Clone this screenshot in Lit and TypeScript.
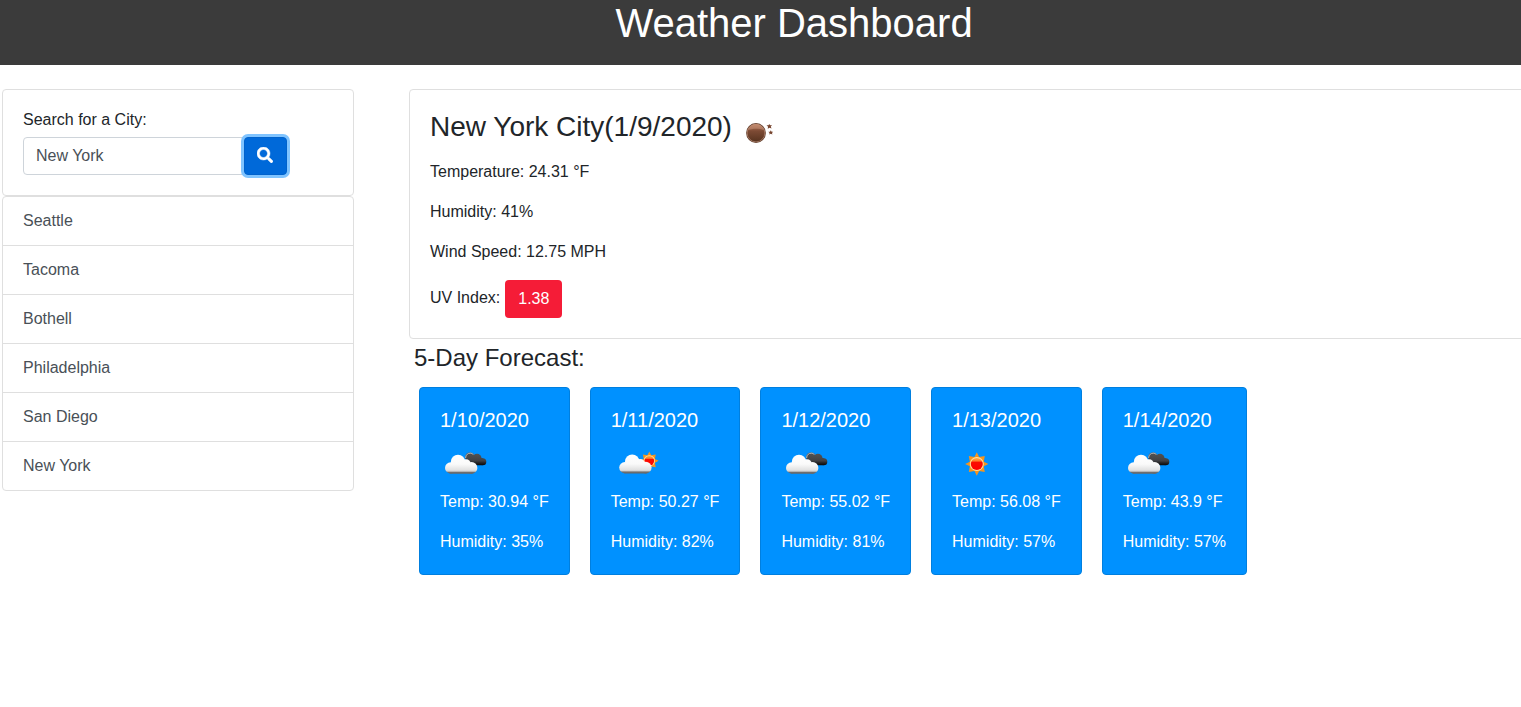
import { LitElement, html, css, svg } from "lit";
import { customElement, property, state } from "lit/decorators.js";

type Kind = "clouds" | "partly" | "sun" | "night";

const whiteCloud = (x: number, y: number) => svg`
  <g transform="translate(${x} ${y})" fill="url(#light)">
    <circle cx="5.8" cy="13.2" r="5.6"/>
    <circle cx="13.2" cy="7.2" r="7.2"/>
    <circle cx="21.2" cy="9.6" r="5"/>
    <circle cx="26.8" cy="13.2" r="5.8"/>
    <rect x="4" y="9" width="25" height="10" rx="2"/>
  </g>`;

const darkCloud = svg`
  <g fill="url(#dark)">
    <circle cx="30" cy="19.2" r="4.8"/>
    <circle cx="37" cy="20.4" r="4.6"/>
    <circle cx="42.8" cy="23.8" r="3.5"/>
    <rect x="29" y="20" width="14.5" height="7.3" rx="1.5"/>
  </g>
  <path d="M25.6 20A4.6 4.6 0 0 1 33.4 16.4" fill="none" stroke="#b5b8bc" stroke-width="1"/>`;

const sunShape = (cx: number, cy: number, scale: number) => svg`
  <g transform="translate(${cx} ${cy}) scale(${scale})">
    <path fill="#f5941e" d="M0-12L2.4-7.2L8.2-8.2L7.2-2.4L12 0L7.2 2.4L8.2 8.2L2.4 7.2L0 12L-2.4 7.2L-8.2 8.2L-7.2 2.4L-12 0L-7.2-2.4L-8.2-8.2L-2.4-7.2Z"/>
    <circle r="7.2" fill="#ffe0a0"/>
    <circle r="6.2" fill="url(#sun)"/>
  </g>`;

@customElement("weather-icon")
export class WeatherIcon extends LitElement {
  @property() kind: Kind = "sun";

  static styles = css`
    :host { display: block; width: 50px; height: 50px; }
    svg { display: block; }
  `;

  private shape() {
    switch (this.kind) {
      case "clouds":
        return svg`${darkCloud}${whiteCloud(4.8, 16.7)}`;
      case "partly":
        return svg`${sunShape(38.3, 22.8, 0.78)}${whiteCloud(8, 16.4)}`;
      case "night":
        return svg`
          <circle cx="25" cy="25" r="9.9" fill="#5d3826"/>
          <circle cx="25" cy="25" r="8.9" fill="url(#moon)" stroke="#d8aa94" stroke-width=".5"/>
          <path d="M16.9 22.2A8.6 8.6 0 0 1 33.1 22.2C28 20.2 22 20.2 16.9 22.2Z" fill="#d9a78e" opacity=".4"/>
          <path fill="#77452f" d="M38.2 16L39.1 17.3L41 17L39.8 18.5L40.5 20.4L38.6 19.7L36.7 20.7L37.1 18.7L35.5 17.3L37.5 17.3Z"/>
          <path fill="#77452f" d="M39.8 22.2L40.6 23.7L42.1 23.7L41 24.9L41.4 26.5L39.8 25.8L38.2 26.5L38.6 24.9L37.3 23.8L39 23.7Z"/>`;
      default:
        return sunShape(24.8, 26, 0.97);
    }
  }

  render() {
    return html`<svg width="50" height="50" viewBox="0 0 50 50">
      <defs>
        <linearGradient id="light" gradientUnits="userSpaceOnUse" x1="0" y1="0" x2="0" y2="19">
          <stop offset="0" stop-color="#fff"/><stop offset=".5" stop-color="#fafafa"/>
          <stop offset=".8" stop-color="#e2e2e2"/><stop offset=".87" stop-color="#d0d0d0"/>
          <stop offset=".92" stop-color="#707070"/><stop offset="1" stop-color="#666"/>
        </linearGradient>
        <linearGradient id="dark" gradientUnits="userSpaceOnUse" x1="0" y1="14.4" x2="0" y2="27.3">
          <stop offset="0" stop-color="#555"/><stop offset=".65" stop-color="#414144"/>
          <stop offset=".82" stop-color="#222224"/><stop offset="1" stop-color="#080809"/>
        </linearGradient>
        <linearGradient id="sun" x1="0" y1="0" x2="0" y2="1">
          <stop offset="0" stop-color="#ffb347"/><stop offset=".25" stop-color="#ff7a28"/>
          <stop offset=".36" stop-color="#fa0d00"/><stop offset="1" stop-color="#ff0000"/>
        </linearGradient>
        <linearGradient id="moon" x1="0" y1="0" x2="0" y2="1">
          <stop offset="0" stop-color="#b8795b"/><stop offset=".4" stop-color="#7c4a34"/>
          <stop offset="1" stop-color="#57331f"/>
        </linearGradient>
      </defs>
      ${this.shape()}
    </svg>`;
  }
}

interface Day { date: string; kind: Kind; temp: string; humidity: number; }

@customElement("app-root")
export class AppRoot extends LitElement {
  @state() private cities = ["Seattle", "Tacoma", "Bothell", "Philadelphia", "San Diego", "New York"];
  @state() private days: Day[] = [
    { date: "1/10/2020", kind: "clouds", temp: "30.94", humidity: 35 },
    { date: "1/11/2020", kind: "partly", temp: "50.27", humidity: 82 },
    { date: "1/12/2020", kind: "clouds", temp: "55.02", humidity: 81 },
    { date: "1/13/2020", kind: "sun", temp: "56.08", humidity: 57 },
    { date: "1/14/2020", kind: "clouds", temp: "43.9", humidity: 57 },
  ];

  static styles = css`
    :host {
      display: block; height: 707px; overflow: hidden; background: #fff;
      font: 400 16px/1.5 "Liberation Sans", Arial, sans-serif; color: #212529;
    }
    * { box-sizing: border-box; }
    h1, h2, h3, h4, p, ul { margin: 0; padding: 0; font-weight: 400; }
    .banner { height: 65px; background: #3b3b3b; color: #fff; padding-left: 67px; text-align: center; }
    .banner h1 { font-size: 40px; line-height: 46px; }
    .layout { display: flex; align-items: flex-start; padding: 24px 0 0 2px; }
    .side { flex: none; width: 352px; margin-right: 55px; }
    .card { border: 1px solid #dfdfdf; border-radius: 4px; background: #fff; padding: 20px; }
    .search { height: 107px; padding-top: 18px; }
    .search label { display: block; line-height: 24px; margin-bottom: 5px; }
    .group { display: flex; }
    .field {
      width: 221px; height: 38px; margin: 0; padding: 6px 12px; font: inherit; color: #495057;
      border: 1px solid #ced4da; border-radius: 4px 0 0 4px; background: #fff; outline: none;
    }
    .go {
      display: flex; align-items: center; justify-content: center; width: 42.5px; height: 38px;
      padding: 0 0 2px; border: 1px solid #0062cc; border-radius: 4px; background: #0069d9; color: #fff;
      box-shadow: 0 0 0 3px #80c4ff; z-index: 1;
    }
    .cities { list-style: none; border: 1px solid #dfdfdf; border-radius: 4px; }
    .city { height: 49px; padding: 12px 20px; color: #495057; border-bottom: 1px solid #dfdfdf; }
    .city:last-child { border-bottom: 0; height: 48px; }
    .main { flex: none; width: 1160px; }
    .today { height: 250px; }
    .headline { display: flex; height: 33.6px; margin-bottom: 16px; }
    .headline h2 { font-size: 28px; line-height: 33.6px; white-space: pre; }
    .headline weather-icon { margin: -2px 0 0 -1px; }
    .line { line-height: 24px; margin-bottom: 16px; }
    .uv { display: flex; align-items: flex-start; gap: 5px; line-height: 36px; }
    .index { height: 38px; padding: 1px 13px 0; background: #f51c37; color: #fff; border-radius: 4px; }
    .outlook { font-size: 24px; line-height: 28.8px; padding: 5px 0 0 5px; }
    .days { display: flex; gap: 20px; padding: 14px 0 0 10px; }
    .day {
      height: 188px; padding: 20px; color: #fff; background: #0091ff;
      border: 1px solid #007fdf; border-radius: 4px; white-space: nowrap;
    }
    .day h4 { font-size: 20px; line-height: 24px; margin-bottom: 6px; }
    .day weather-icon { margin-bottom: 2px; }
    .day .line:last-child { margin: 0; }
  `;

  render() {
    return html`
      <header class="banner"><h1>Weather Dashboard</h1></header>
      <div class="layout">
        <aside class="side">
          <section class="card search">
            <label for="city">Search for a City:</label>
            <div class="group">
              <input class="field" id="city" type="text" .value=${"New York"} />
              <button class="go" aria-label="Search">
                <svg width="16" height="16" viewBox="0 0 512 512" fill="currentColor" stroke="currentColor" stroke-width="14">
                  <path d="M505 442.700L405.300 343c-4.500-4.500-10.600-7-17-7H372c27.600-35.300 44-79.700 44-128C416 93.100 322.900 0 208 0S0 93.100 0 208s93.100 208 208 208c48.300 0 92.700-16.400 128-44v16.300c0 6.400 2.500 12.500 7 17l99.700 99.700c9.400 9.400 24.600 9.400 33.900 0l28.300-28.300c9.400-9.400 9.400-24.600.1-34zM208 336c-70.700 0-128-57.200-128-128 0-70.700 57.200-128 128-128 70.700 0 128 57.200 128 128 0 70.700-57.200 128-128 128z"/>
                </svg>
              </button>
            </div>
          </section>
          <ul class="cities">${this.cities.map((c) => html`<li class="city">${c}</li>`)}</ul>
        </aside>
        <main class="main">
          <section class="card today">
            <div class="headline">
              <h2>New York City(1/9/2020)</h2>
              <weather-icon kind="night"></weather-icon>
            </div>
            <p class="line">Temperature: 24.31 °F</p>
            <p class="line">Humidity: 41%</p>
            <p class="line">Wind Speed: 12.75 MPH</p>
            <div class="uv"><span>UV Index:</span><span class="index">1.38</span></div>
          </section>
          <h3 class="outlook">5-Day Forecast:</h3>
          <div class="days">
            ${this.days.map((d) => html`
              <article class="day">
                <h4>${d.date}</h4>
                <weather-icon kind=${d.kind}></weather-icon>
                <p class="line">Temp: ${d.temp} °F</p>
                <p class="line">Humidity: ${d.humidity}%</p>
              </article>`)}
          </div>
        </main>
      </div>`;
  }
}
